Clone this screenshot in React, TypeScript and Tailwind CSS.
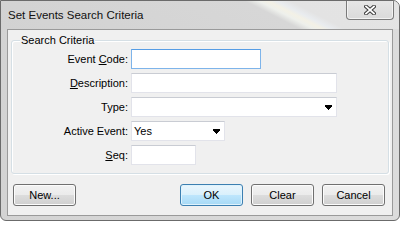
import React from "react";

const Arrow = () => (
  <svg width="7" height="5" viewBox="0 0 7 5" className="block" shapeRendering="crispEdges">
    <rect x="0" y="0" width="7" height="1" fill="#000" />
    <rect x="0" y="1" width="7" height="1" fill="#000" />
    <rect x="1" y="2" width="5" height="1" fill="#000" />
    <rect x="2" y="3" width="3" height="1" fill="#000" />
    <rect x="3" y="4" width="1" height="1" fill="#000" />
  </svg>
);

const Row = ({ label, children }: { label: React.ReactNode; children: React.ReactNode }) => (
  <div className="flex h-[20px] items-center">
    <div className="w-[116px] text-right leading-[13px]">{label}</div>
    <div className="ml-[3px] flex h-[20px]">{children}</div>
  </div>
);

const TextBox = ({ w, focused }: { w: string; focused?: boolean }) => (
  <div
    className={
      focused
        ? `${w} h-[20px] border border-[#7eb4ea] border-t-[#569de5] bg-white`
        : `${w} h-[20px] border border-[#e2e3ea] border-t-[#c9ccd3] bg-white`
    }
  />
);

const Combo = ({ w, value }: { w: string; value?: string }) => (
  <div className={`${w} flex h-[20px] items-center justify-between border border-[#e2e3ea] border-t-[#c9ccd3] bg-white pl-[2px] pr-[4px]`}>
    <span className="leading-[13px]">{value ?? ""}</span>
    <Arrow />
  </div>
);

const Btn = ({ children, def }: { children: React.ReactNode; def?: boolean }) => (
  <div
    className={
      def
        ? "flex h-[22px] w-[63px] items-center justify-center rounded-[3px] border border-[#3c7fb1] bg-[linear-gradient(to_bottom,#eaf6fd_0%,#d9f0fc_50%,#bee6fd_50%,#a7d9f5_100%)] leading-[13px] shadow-[inset_0_0_0_1px_#dff3fd]"
        : "flex h-[22px] w-[63px] items-center justify-center rounded-[3px] border border-[#707070] bg-[linear-gradient(to_bottom,#f2f2f2_0%,#ebebeb_50%,#dddddd_50%,#cfcfcf_100%)] leading-[13px] shadow-[inset_0_0_0_1px_#fcfcfc]"
    }
  >
    {children}
  </div>
);

export default function App() {
  return (
    <div className="relative h-[221px] w-[400px] overflow-hidden rounded-tr-[7px] rounded-b-[6px] border border-[#6b6b6b] bg-[linear-gradient(to_right,#d3d3d3,#dcdcdc)] font-['Liberation_Sans',Arial,sans-serif] text-[11px] text-black">
      {/* Title bar */}
      <div className="flex h-[28px] items-start justify-between bg-[linear-gradient(27deg,#d2d2d2_0%,#d7d7d7_66%,#eef0ec_69%,#f3f1e6_71%,#e9ecef_73%,#e3e3e3_76%,#e4e4e4_100%)]">
        <div className="pl-[7px] pt-[7px] text-[11.5px] leading-[14px] text-[#111]">Set Events Search Criteria</div>
        <div className="-mt-[1px] mr-[5px] flex h-[20px] w-[48px] items-center justify-center rounded-b-[4px] border border-t-0 border-[#7a7a7a] bg-[linear-gradient(to_bottom,#e6e6e6,#dadada)] shadow-[inset_0_0_0_1px_#f2f2f2]">
          <svg width="12" height="10" viewBox="0 0 12 10" className="block">
            <path d="M2 1.5 L10 8.5 M10 1.5 L2 8.5" stroke="#3e3e3e" strokeWidth="3.8" strokeLinecap="square" />
            <path d="M2 1.5 L10 8.5 M10 1.5 L2 8.5" stroke="#ffffff" strokeWidth="1.7" strokeLinecap="square" />
          </svg>
        </div>
      </div>

      {/* Client area */}
      <div className="ml-[6px] h-[187px] w-[386px] border border-[#9a9a9a] bg-[#f0f0f0]">
        <div className="relative mx-[3px] mt-[10px] rounded-[3px] border border-[#d5dfe5] pb-[8px] pt-[8px] shadow-[inset_1px_1px_0_#fff,1px_1px_0_#fff]">
          <span className="absolute -top-[7px] left-[8px] bg-[#f0f0f0] px-[1px] leading-[13px]">Search Criteria</span>
          <div className="flex flex-col gap-[4px]">
            <Row label={<>Event <span className="underline underline-offset-[1px]">C</span>ode:</>}>
              <TextBox w="w-[130px]" focused />
            </Row>
            <Row label={<><span className="underline underline-offset-[1px]">D</span>escription:</>}>
              <TextBox w="w-[206px]" />
            </Row>
            <Row label="Type:">
              <Combo w="w-[206px]" />
            </Row>
            <Row label="Active Event:">
              <Combo w="w-[94px]" value="Yes" />
            </Row>
            <Row label={<><span className="underline underline-offset-[1px]">S</span>eq:</>}>
              <TextBox w="w-[65px]" />
            </Row>
          </div>
        </div>

        <div className="mt-[10px] flex items-center pl-[5px] pr-[7px]">
          <Btn>New...</Btn>
          <div className="flex-1" />
          <div className="flex gap-[8px]">
            <Btn def>OK</Btn>
            <Btn>Clear</Btn>
            <Btn>Cancel</Btn>
          </div>
        </div>
      </div>
    </div>
  );
}
